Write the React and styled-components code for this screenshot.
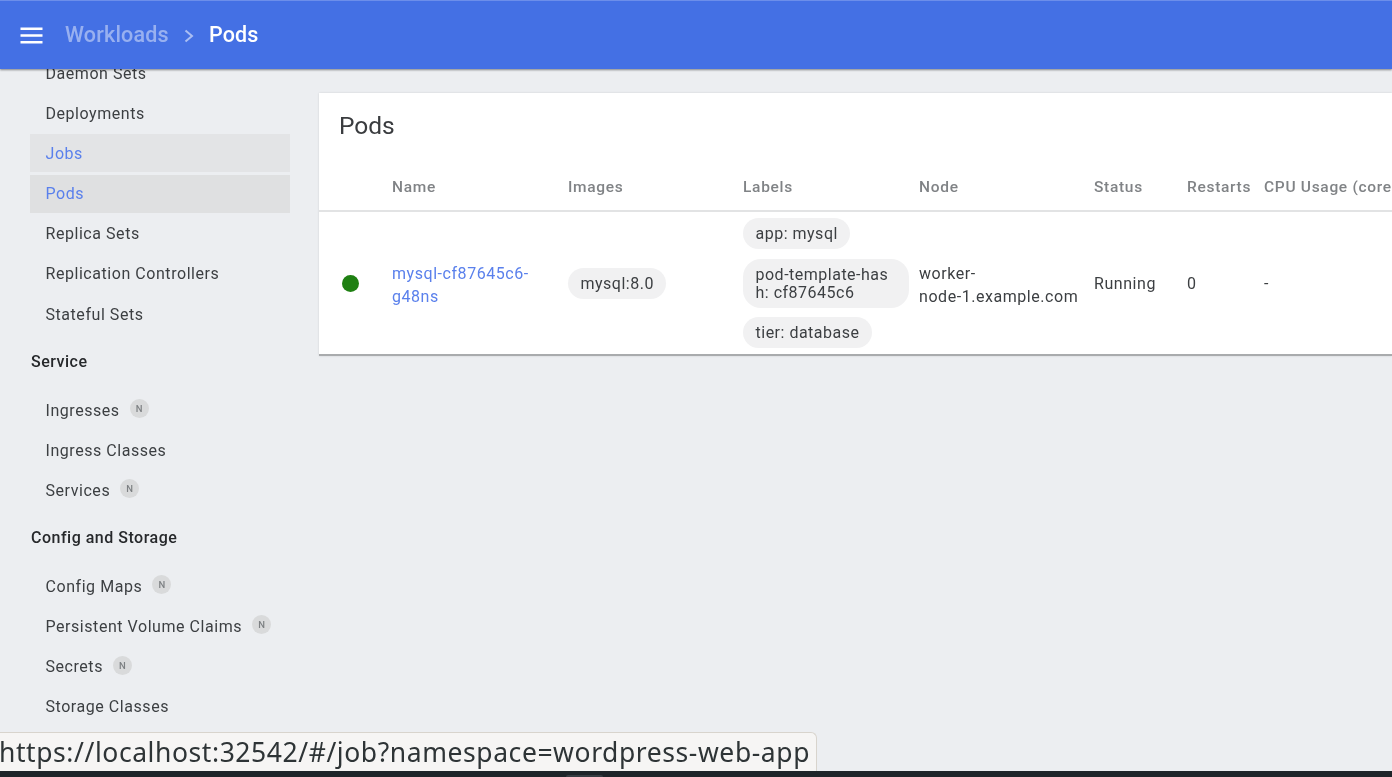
import styled, { createGlobalStyle } from "styled-components";

const GlobalStyle = createGlobalStyle`
  html, body {
    margin: 0;
    padding: 0;
    height: 100%;
    overflow: hidden;
    background: #eceef1;
    font-family: Roboto, "Liberation Sans", sans-serif;
  }
`;

const Page = styled.div`
  width: 1392px;
  height: 777px;
  position: relative;
  overflow: hidden;
  display: flex;
  flex-direction: column;
  background: #eceef1;
`;

const Blurred = styled.div`
  display: flex;
  flex-direction: column;
  height: 771px;
  filter: blur(0.55px);
`;

const TopBar = styled.header`
  height: 69px;
  flex: none;
  display: flex;
  align-items: center;
  padding-left: 18px;
  background: #4470e4;
  border-top: 1px solid #6c8eea;
  box-sizing: border-box;
  box-shadow: 0 1px 2px rgba(0, 0, 0, 0.45);
  position: relative;
  z-index: 2;
  font-size: 21.5px;
  font-weight: 500;
  letter-spacing: 0.2px;
`;

const MenuIcon = styled.svg`
  width: 27px;
  height: 27px;
  margin-right: 20px;
  flex: none;
`;

const Crumb = styled.span`
  margin-top: -1px;
  color: ${(p) => (p.$current ? "#ffffff" : "rgba(255, 255, 255, 0.45)")};
`;

const Chevron = styled.svg`
  width: 14px;
  height: 18px;
  margin: 2px 13px 0 13px;
  flex: none;
`;

const Body = styled.div`
  flex: 1;
  display: flex;
  min-height: 0;
`;

const Sidebar = styled.nav`
  width: 319px;
  flex: none;
  overflow: hidden;
  padding: 0 0 0 30px;
  box-sizing: border-box;
`;

const SidebarScroll = styled.div`
  width: 260px;
  margin-top: -15px;
  display: flex;
  flex-direction: column;
`;

const NavItem = styled.div`
  height: 38px;
  margin-bottom: 2.2px;
  display: flex;
  align-items: center;
  padding-left: 15.5px;
  font-size: 16px;
  letter-spacing: 0.55px;
  color: ${(p) => (p.$active ? "#5a80ec" : "#3c3f42")};
  background: ${(p) => p.$bg || "transparent"};
`;

const NavHeading = styled.div`
  height: 20px;
  margin: 16.3px 0 19.4px 1px;
  display: flex;
  align-items: center;
  font-size: 16px;
  letter-spacing: 0.5px;
  font-weight: 500;
  color: #26282b;
`;

const NewBadge = styled.span`
  width: 19px;
  height: 19px;
  margin: -3px 0 0 10px;
  border-radius: 50%;
  background: #d9dadb;
  color: #7d8083;
  font-size: 9.5px;
  font-weight: 500;
  letter-spacing: 0;
  display: inline-flex;
  align-items: center;
  justify-content: center;
`;

const Main = styled.main`
  flex: 1;
  min-width: 0;
  padding-top: 24px;
`;

const Card = styled.section`
  height: 263px;
  box-sizing: border-box;
  background: #ffffff;
  border-bottom: 2px solid #a9abad;
  box-shadow: 0 0 2px rgba(0, 0, 0, 0.12);
  overflow: hidden;
`;

const CardTitle = styled.h1`
  margin: 0;
  height: 72px;
  padding: 17px 0 0 20px;
  box-sizing: border-box;
  font-size: 24.5px;
  font-weight: 400;
  line-height: 32px;
  color: #3a3c3f;
`;

const Row = styled.div`
  display: grid;
  grid-template-columns: 73px 176px 175px 176px 175px 93px 77px 128px;
  align-items: center;
  height: ${(p) => p.$h};
  width: 1073px;
`;

const HeaderRow = styled(Row)`
  border-bottom: 2px solid #e2e3e4;
  box-sizing: border-box;
  padding-bottom: 2px;
  color: #808386;
  font-size: 15.5px;
  font-weight: 500;
  letter-spacing: 0.7px;
  white-space: nowrap;
`;

const DataCell = styled.div`
  font-size: 16px;
  letter-spacing: 0.55px;
  line-height: 23px;
  color: #3c3f42;
  white-space: pre;
  padding-top: ${(p) => p.$shift || "0"};
`;

const StatusDot = styled.span`
  display: block;
  width: 17px;
  height: 17px;
  margin: 1px 0 0 23px;
  border-radius: 50%;
  background: #1f8012;
`;

const PodLink = styled.a`
  color: #5a80ec;
  font-size: 16px;
  letter-spacing: 0.55px;
  line-height: 23px;
  white-space: pre;
  padding-top: 4px;
`;

const ChipStack = styled.div`
  display: flex;
  flex-direction: column;
  align-items: flex-start;
  gap: 9.5px;
`;

const Chip = styled.span`
  display: inline-block;
  padding: ${(p) => (p.$wrap ? "7px 12.5px 6px" : "7px 12.5px")};
  width: ${(p) => (p.$wrap ? "166px" : "auto")};
  box-sizing: border-box;
  border-radius: ${(p) => (p.$wrap ? "18px" : "16px")};
  background: #f1f1f2;
  color: #3c3f42;
  font-size: 16px;
  letter-spacing: 0.5px;
  line-height: ${(p) => (p.$wrap ? "18px" : "17px")};
  white-space: pre;
`;

const StatusBubble = styled.div`
  position: absolute;
  left: -4px;
  top: 732px;
  height: 39px;
  box-sizing: border-box;
  padding: 0 6px 0 2px;
  display: flex;
  align-items: center;
  background: #f6f5f4;
  border: 1px solid #d8d4cd;
  border-bottom: none;
  border-top-right-radius: 6px;
  font-family: "Noto Sans", "DejaVu Sans", sans-serif;
  font-size: 26.5px;
  letter-spacing: 0.57px;
  color: #2e3436;
  white-space: nowrap;
  filter: blur(0.4px);
`;

const Taskbar = styled.div`
  height: 6px;
  flex: none;
  position: relative;
  background: #1e2429;
`;

const TaskbarTab = styled.span`
  position: absolute;
  left: 566px;
  top: 4px;
  width: 37px;
  height: 2px;
  border-radius: 2px 2px 0 0;
  background: #363c42;
`;

const sections = [
  { items: [["Daemon Sets"], ["Deployments"], ["Jobs", false, "#e3e4e6"], ["Pods", false, "#dfe0e1"], ["Replica Sets"], ["Replication Controllers"], ["Stateful Sets"]] },
  { title: "Service", items: [["Ingresses", true], ["Ingress Classes"], ["Services", true]] },
  { title: "Config and Storage", items: [["Config Maps", true], ["Persistent Volume Claims", true], ["Secrets", true], ["Storage Classes"]] },
];

const columns = ["", "Name", "Images", "Labels", "Node", "Status", "Restarts", "CPU Usage (cores)"];

export default function App() {
  return (
    <Page>
      <GlobalStyle />
      <Blurred>
        <TopBar>
          <MenuIcon viewBox="0 0 27 27">
            <path d="M2.5 6.8h22M2.5 13.5h22M2.5 20.2h22" stroke="#fff" strokeWidth="2.5" fill="none" />
          </MenuIcon>
          <Crumb>Workloads</Crumb>
          <Chevron viewBox="0 0 14 18">
            <path d="M3.5 3.5L10 9l-6.5 5.5" stroke="rgba(255,255,255,0.55)" strokeWidth="2" fill="none" />
          </Chevron>
          <Crumb $current>Pods</Crumb>
        </TopBar>
        <Body>
          <Sidebar>
            <SidebarScroll>
              {sections.map((s) => (
                <div key={s.title || "workloads"}>
                  {s.title && <NavHeading>{s.title}</NavHeading>}
                  {s.items.map(([name, isNew, bg]) => (
                    <NavItem key={name} $active={!!bg} $bg={bg}>
                      {name}
                      {isNew && <NewBadge>N</NewBadge>}
                    </NavItem>
                  ))}
                </div>
              ))}
            </SidebarScroll>
          </Sidebar>
          <Main>
            <Card>
              <CardTitle>Pods</CardTitle>
              <HeaderRow $h="47px">
                {columns.map((c) => (
                  <div key={c || "dot"}>{c}</div>
                ))}
              </HeaderRow>
              <Row $h="142px">
                <StatusDot />
                <PodLink>{"mysql-cf87645c6-\ng48ns"}</PodLink>
                <div>
                  <Chip>mysql:8.0</Chip>
                </div>
                <ChipStack>
                  <Chip>app: mysql</Chip>
                  <Chip $wrap>{"pod-template-has\nh: cf87645c6"}</Chip>
                  <Chip>tier: database</Chip>
                </ChipStack>
                <DataCell $shift="4px">{"worker-\nnode-1.example.com"}</DataCell>
                <DataCell>Running</DataCell>
                <DataCell>0</DataCell>
                <DataCell>-</DataCell>
              </Row>
            </Card>
          </Main>
        </Body>
      </Blurred>
      <Taskbar>
        <TaskbarTab />
      </Taskbar>
      <StatusBubble>https://localhost:32542/#/job?namespace=wordpress-web-app</StatusBubble>
    </Page>
  );
}
